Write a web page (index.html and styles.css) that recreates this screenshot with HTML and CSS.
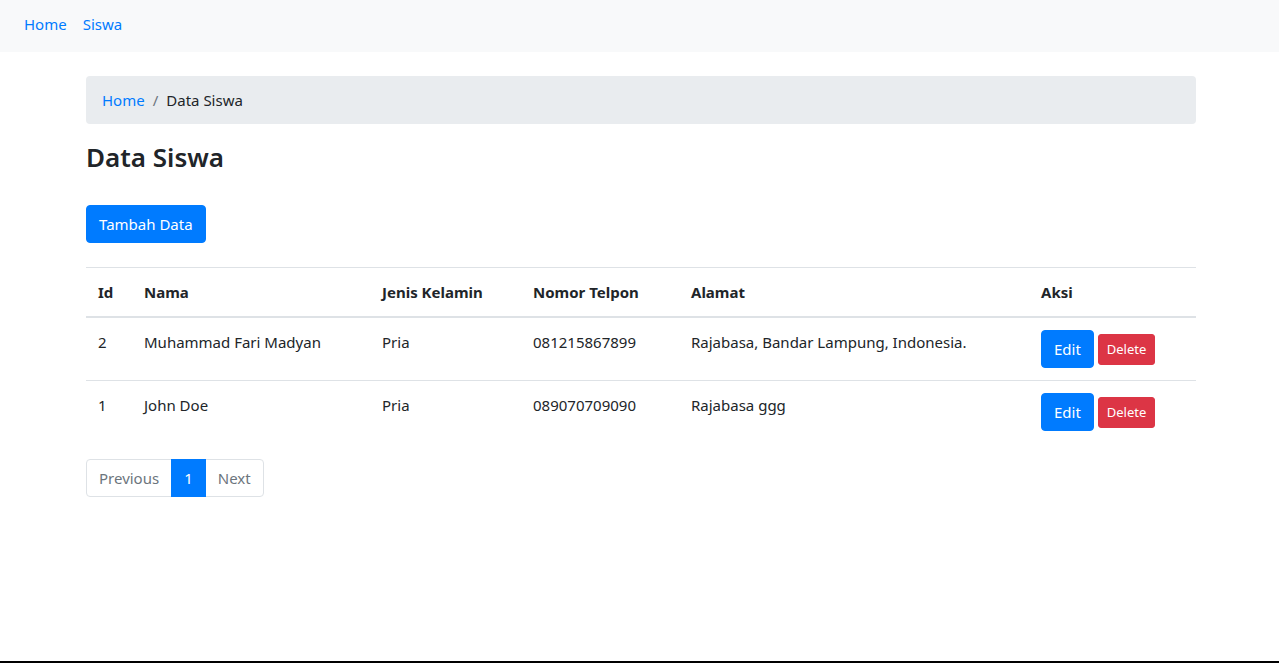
FILE: index.html
```html
<!DOCTYPE html>
<html lang="id">
<head>
<meta charset="utf-8">
<title>Data Siswa</title>
<link rel="stylesheet" href="styles.css">
</head>
<body>
<nav class="navbar">
  <a class="nav-link" href="#">Home</a>
  <a class="nav-link" href="#">Siswa</a>
</nav>
<main class="container">
  <ol class="breadcrumb">
    <li class="crumb"><a href="#">Home</a></li>
    <li class="crumb sep">/</li>
    <li class="crumb active">Data Siswa</li>
  </ol>
  <h3 class="title">Data Siswa</h3>
  <div class="actions"><a class="btn btn-primary" href="#">Tambah Data</a></div>
  <table class="table">
    <colgroup>
      <col class="c-id"><col class="c-nama"><col class="c-jk"><col class="c-tel"><col class="c-alamat"><col class="c-aksi">
    </colgroup>
    <thead>
      <tr><th>Id</th><th>Nama</th><th>Jenis Kelamin</th><th>Nomor Telpon</th><th>Alamat</th><th>Aksi</th></tr>
    </thead>
    <tbody>
      <tr>
        <td>2</td><td>Muhammad Fari Madyan</td><td>Pria</td><td>081215867899</td><td>Rajabasa, Bandar Lampung, Indonesia.</td>
        <td><a class="btn btn-primary" href="#">Edit</a> <a class="btn btn-danger btn-sm" href="#">Delete</a></td>
      </tr>
      <tr>
        <td>1</td><td>John Doe</td><td>Pria</td><td>089070709090</td><td>Rajabasa ggg</td>
        <td><a class="btn btn-primary" href="#">Edit</a> <a class="btn btn-danger btn-sm" href="#">Delete</a></td>
      </tr>
    </tbody>
  </table>
  <ul class="pagination">
    <li class="page-link first">Previous</li>
    <li class="page-link current">1</li>
    <li class="page-link last">Next</li>
  </ul>
</main>
<div class="bottom-line"></div>
</body>
</html>
```
FILE: styles.css
```css
html, body { margin: 0; padding: 0; height: 100%; }
body {
  font-family: "Noto Sans", "Open Sans", sans-serif;
  font-size: 15px;
  line-height: 24px;
  color: #212529;
  background: #fff;
  position: relative;
}
a { color: #007bff; text-decoration: none; }
.navbar {
  height: 52px;
  background: #f8f9fa;
  display: flex;
  align-items: flex-start;
  padding: 12px 8px 0 16px;
  box-sizing: border-box;
}
.nav-link { padding: 0 8px; }
.container { width: 1110px; margin-left: 86px; }
.breadcrumb {
  list-style: none;
  margin: 24px 0 16px;
  padding: 12px 16px;
  background: #e9ecef;
  border-radius: 4px;
  display: flex;
}
.crumb.sep { color: #6c757d; padding: 0 8px; }
.crumb.active { color: #212529; }
.title {
  font-size: 26px;
  line-height: 34px;
  font-weight: 600;
  margin: 0 0 31px;
}
.actions { margin: 0 0 24px; }
.btn {
  display: inline-block;
  font-size: 15px;
  line-height: 24px;
  padding: 6px 12px;
  border: 1px solid transparent;
  border-radius: 4px;
  color: #fff;
  vertical-align: middle;
}
.btn-primary { background: #007bff; border-color: #007bff; }
.btn-danger { background: #dc3545; border-color: #dc3545; }
.btn-sm { font-size: 13px; line-height: 21px; padding: 4px 8px; border-radius: 3px; }
.table { width: 100%; border-collapse: collapse; margin-bottom: 16px; table-layout: fixed; }
.c-id { width: 46px; } .c-nama { width: 238px; } .c-jk { width: 151px; }
.c-tel { width: 158px; } .c-alamat { width: 350px; } .c-aksi { width: 167px; }
.table th, .table td {
  padding: 12px;
  text-align: left;
  vertical-align: top;
  border-top: 1px solid #dee2e6;
}
.table th { font-weight: 700; vertical-align: bottom; border-bottom: 2px solid #dee2e6; }
.table tbody tr:first-child td { border-top: 0; }
.pagination { list-style: none; margin: 0; padding: 0; display: flex; }
.page-link {
  padding: 6px 12px;
  line-height: 24px;
  border: 1px solid #dee2e6;
  margin-left: -1px;
  color: #6c757d;
}
.page-link.first { margin-left: 0; border-radius: 4px 0 0 4px; }
.page-link.last { border-radius: 0 4px 4px 0; }
.page-link.current { background: #007bff; border-color: #007bff; color: #fff; position: relative; }
.bottom-line { position: absolute; left: 0; right: 0; bottom: 0; height: 2px; background: #000; }
```
